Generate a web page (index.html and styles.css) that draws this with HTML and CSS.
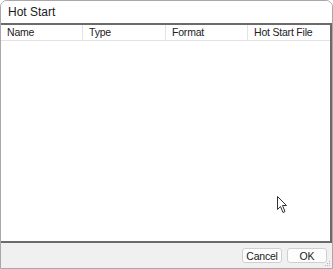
FILE: index.html
```html
<!DOCTYPE html>
<html lang="en">
<head>
  <meta charset="UTF-8">
  <title>Hot Start</title>
  <link rel="stylesheet" href="styles.css">
</head>
<body>
<div class="dialog">
  <div class="title">Hot Start</div>

  <div class="grid">
    <div class="grid-head">
      <div class="col">Name</div>
      <div class="col">Type</div>
      <div class="col">Format</div>
      <div class="col">Hot Start File</div>
    </div>
    <div class="grid-body"></div>
  </div>

  <div class="footer">
    <button class="btn">Cancel</button>
    <button class="btn">OK</button>
  </div>

  <svg class="grip" width="6" height="6" viewBox="0 0 6 6">
    <rect x="4" y="0" width="1" height="1" fill="#b8b8b8"/>
    <rect x="2" y="2" width="1" height="1" fill="#b8b8b8"/>
    <rect x="4" y="2" width="1" height="1" fill="#b8b8b8"/>
    <rect x="0" y="4" width="1" height="1" fill="#b8b8b8"/>
    <rect x="2" y="4" width="1" height="1" fill="#b8b8b8"/>
    <rect x="4" y="4" width="1" height="1" fill="#b8b8b8"/>
  </svg>

  <svg class="cursor" width="12" height="18" viewBox="0 0 12 18">
    <path d="M0.5 0.5 L0.5 13.5 L3.5 10.5 L6 16.5 L8 15.5 L5.5 9.5 L9.5 9.5 Z" fill="#fff" stroke="#333" stroke-width="1"/>
  </svg>
</div>
</body>
</html>
```

FILE: styles.css
```css
* {
    margin: 0;
    padding: 0;
    box-sizing: border-box;
    font-family: 'Liberation Sans', Arial, sans-serif;
}

body {
    background-color: #ffffff;
    color: #1a1a1a;
}

.dialog {
    position: relative;
    width: 333px;
    height: 269px;
    border: 1px solid #a8a8a8;
    border-top-left-radius: 7px;
    border-top-right-radius: 7px;
    background-color: #f0f0f0;
    display: flex;
    flex-direction: column;
    overflow: hidden;
}

.title {
    height: 22px;
    background-color: #ffffff;
    font-size: 12px;
    padding: 4px 0 0 7px;
}

.grid {
    flex: 1;
    display: flex;
    flex-direction: column;
    background-color: #ffffff;
    border-top: 2px solid #6a6a6a;
    border-right: 2px solid #6a6a6a;
    border-bottom: 2px solid #6a6a6a;
}

.grid-head {
    display: grid;
    grid-template-columns: 82px 83px 82px 1fr;
    height: 16px;
    border-bottom: 1px solid #e3e3e3;
}

.col {
    font-size: 10.5px;
    letter-spacing: -0.2px;
    color: #222;
    padding: 1px 0 0 6px;
    border-right: 1px solid #e3e3e3;
}

.col:last-child {
    border-right: none;
}

.grid-body {
    flex: 1;
}

.footer {
    height: 25px;
    display: flex;
    justify-content: flex-end;
    align-items: center;
    gap: 5px;
    padding: 0 5px 0 0;
}

.btn {
    width: 40px;
    height: 15px;
    font-size: 10.5px;
    letter-spacing: -0.2px;
    color: #1a1a1a;
    background-color: #fdfdfd;
    border: 1px solid #d0d0d0;
    border-radius: 3px;
}

.grip {
    position: absolute;
    right: 1px;
    bottom: 1px;
}

.cursor {
    position: absolute;
    left: 276px;
    top: 195px;
}
```
